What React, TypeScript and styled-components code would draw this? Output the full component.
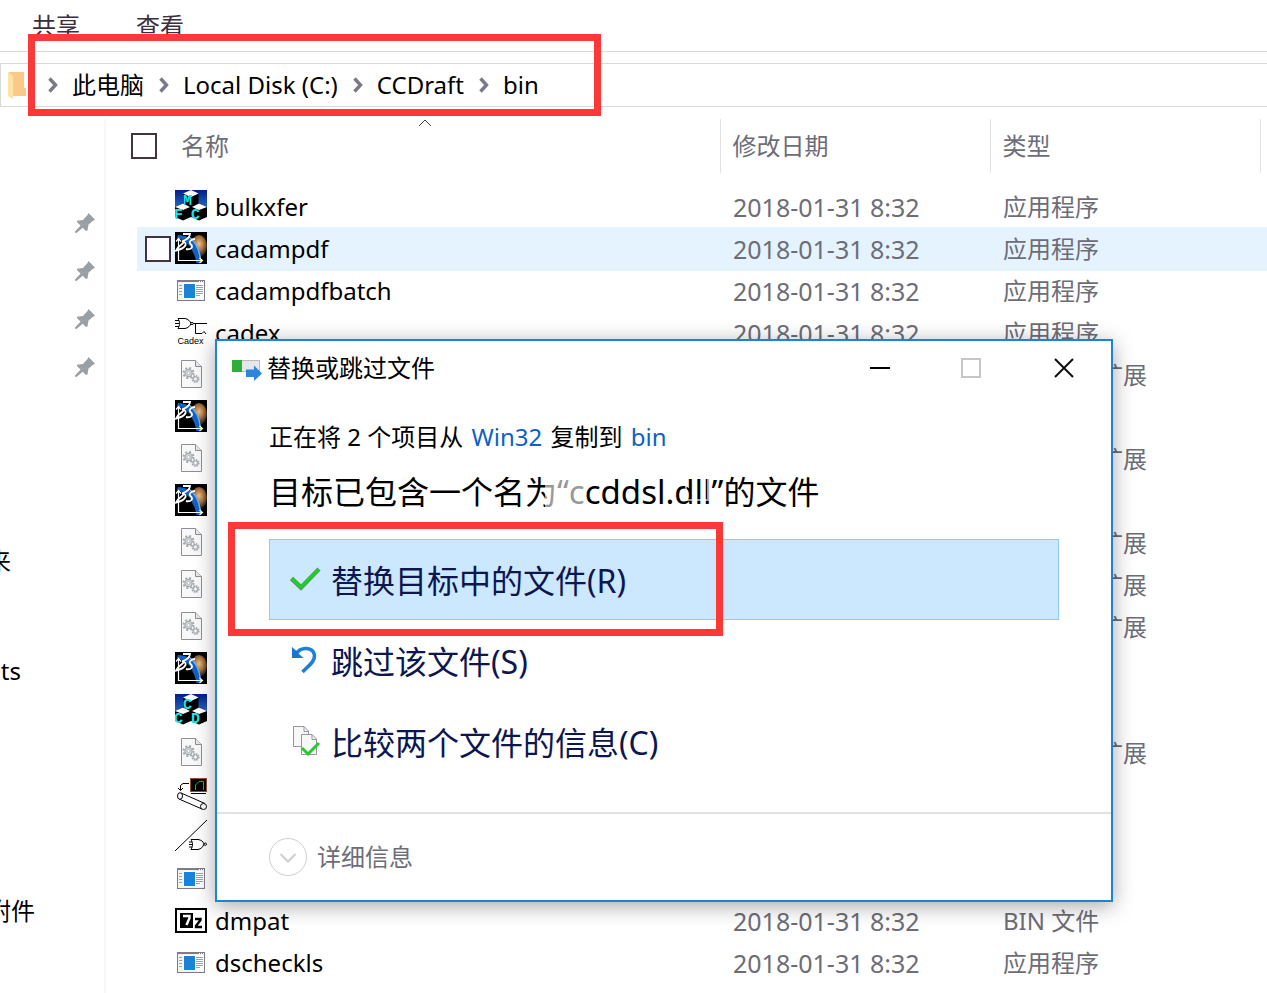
import React from 'react';
import styled, { createGlobalStyle, css } from 'styled-components';

const Global = createGlobalStyle`
  * { box-sizing: border-box; }
  html, body { margin: 0; background: #fff; overflow: hidden; }
  body {
    font-family: "Noto Sans", "Noto Sans CJK SC", sans-serif;
    font-size: 24px;
    line-height: 32px;
    color: #000;
  }
  button, input { font: inherit; color: inherit; }
`;

const RED = '#fc3838';
const BLUE = '#1c83d9';

const Explorer = styled.div`
  position: relative;
  display: flex;
  flex-direction: column;
  min-height: 100vh;
`;

const Ribbon = styled.nav`
  display: flex;
  gap: 56px;
  height: 52px;
  padding: 10px 32px 0;
  border-bottom: 1px solid #dadada;
`;

const RibbonTab = styled.button`
  border: 0;
  padding: 0;
  background: none;
  height: 32px;
  color: #3b2f3f;
`;

const AddressBar = styled.nav`
  display: flex;
  align-items: center;
  height: 44px;
  margin-top: 11px;
  padding-left: 6px;
  border: 1px solid #d9d9d9;
  border-right: 0;
`;

const Crumbs = styled.ol`
  display: flex;
  align-items: center;
  list-style: none;
  margin: 0 0 0 21px;
  padding: 0;
`;

const Crumb = styled.li`
  display: flex;
  align-items: center;
  margin-right: 15px;
`;

const CrumbLink = styled.a`
  margin-left: 14px;
  color: #000;
  text-decoration: none;
  white-space: nowrap;
`;

const Main = styled.div`
  display: flex;
  flex: 1;
  padding-top: 12px;
`;

const Sidebar = styled.aside`
  flex: 0 0 106px;
  overflow: hidden;
  border-right: 2px solid #f8f8f8;
`;

const PinList = styled.ul`
  display: flex;
  flex-direction: column;
  gap: 28px;
  align-items: flex-end;
  list-style: none;
  margin: 0;
  padding: 94px 9px 0 0;
`;

const Pin = styled.li`
  height: 20px;
  line-height: 0;
`;

const SideList = styled.ul`
  list-style: none;
  margin: 0;
  padding: 168px 0 0;
`;

const SideItem = styled.li<{ $space: number; $width: number }>`
  display: flex;
  justify-content: flex-end;
  width: ${p => p.$width}px;
  margin-bottom: ${p => p.$space}px;
  white-space: nowrap;
`;

const FileTable = styled.table`
  flex: 1;
  align-self: flex-start;
  table-layout: fixed;
  border-collapse: collapse;
  margin-left: 31px;
  width: 100%;
`;

const HeadCell = styled.th<{ $line?: boolean }>`
  height: 54px;
  padding: 0 0 0 12px;
  text-align: left;
  font-weight: 400;
  color: #6d6d78;
  ${p => p.$line && css`border-left: 1px solid #e3e3e3;`}
`;

const NameHead = styled.div`
  position: relative;
  display: flex;
  align-items: center;
  gap: 24px;
  margin-left: -18px;
`;

const SortMark = styled.span`
  position: absolute;
  left: 50%;
  top: -12px;
  margin-left: -7px;
  line-height: 0;
`;

const Check = styled.input`
  appearance: none;
  flex: none;
  width: 26px;
  height: 26px;
  margin: 0;
  border: 2px solid #43323f;
  background: #fff;
`;

const SpacerRow = styled.tr`
  height: 13px;
`;

const Row = styled.tr<{ $hot?: boolean }>`
  height: 42px;
  ${p => p.$hot && css`
    background: #e5f3ff;
    box-shadow: 0 1px #e5f3ff, 0 -1px #e5f3ff;
  `}
`;

const Cell = styled.td`
  padding: 0 0 0 13px;
  color: #6d6d78;
  white-space: nowrap;
`;

const DateCell = styled(Cell)`
  font-size: 25px;
`;

const NameCell = styled.td`
  padding: 0;
`;

const NameWrap = styled.label`
  display: flex;
  align-items: center;
  height: 42px;
  padding-left: 8px;
`;

const CheckSlot = styled.span`
  display: flex;
  width: 30px;
`;

const FileIcon = styled.span`
  display: flex;
  justify-content: center;
  align-items: center;
  width: 32px;
  height: 38px;
  padding-bottom: 2px;
  margin-right: 8px;
`;

const Dialog = styled.section`
  position: absolute;
  left: 215px;
  right: 154px;
  top: 339px;
  background: #fff;
  border: 2px solid ${BLUE};
  box-shadow: 0 4px 20px rgba(0, 0, 0, 0.35);
`;

const TitleBar = styled.header`
  display: flex;
  align-items: center;
  height: 54px;
  padding: 0 36px 0 15px;
`;

const Title = styled.h1`
  flex: 1;
  margin: 0 0 0 4px;
  font-size: 24px;
  font-weight: 400;
`;

const WindowButtons = styled.div`
  display: flex;
  gap: 70px;
`;

const WindowButton = styled.button`
  border: 0;
  padding: 0;
  background: none;
  width: 22px;
  height: 22px;
  line-height: 0;
`;

const Body = styled.div`
  padding: 26px 52px 30px;
`;

const Summary = styled.p`
  margin: 0;
`;

const PathLink = styled.a`
  margin: 0 2px;
  color: #0f5fc4;
  text-decoration: none;
`;

const Headline = styled.h2`
  margin: 16px 0 24px;
  font-size: 32px;
  line-height: 46px;
  font-weight: 400;
  white-space: nowrap;
`;

/* A faint white mark lies over parts of the file name. */
const MarkedName = styled.span`
  position: relative;
  font-size: 33px;
  &::before, &::after {
    content: "";
    position: absolute;
    opacity: 0.6;
  }
  &::before {
    left: -12px;
    top: 4px;
    width: 40px;
    height: 40px;
    background: #fff;
  }
  &::after {
    right: 14px;
    top: 8px;
    width: 20px;
    height: 20px;
    border: 2px solid #fff;
  }
`;

const Choice = styled.button<{ $active?: boolean }>`
  display: flex;
  align-items: center;
  gap: 10px;
  width: 100%;
  height: 81px;
  padding: 2px 0 0 20px;
  border: 1px solid ${p => (p.$active ? '#8dcbfb' : 'transparent')};
  background: ${p => (p.$active ? '#cce8ff' : 'none')};
  color: #0c1650;
  font-size: 32px;
  line-height: 46px;
  text-align: left;
`;

const ChoiceIcon = styled.span`
  width: 31px;
  padding-bottom: 4px;
  line-height: 0;
`;

const Footer = styled.footer`
  height: 88px;
  border-top: 2px solid #e1e1e1;
  padding: 0 52px;
  display: flex;
  align-items: center;
`;

const Details = styled.button`
  display: flex;
  align-items: center;
  gap: 10px;
  border: 0;
  padding: 0;
  background: none;
  color: #6d6d78;
`;

const AddressMark = styled.div`
  position: absolute;
  left: 28px;
  top: 34px;
  width: 573px;
  height: 82px;
  border: 7px solid ${RED};
  pointer-events: none;
`;

const ChoiceMark = styled(AddressMark)`
  left: 228px;
  top: 522px;
  width: 495px;
  height: 114px;
`;

const Chevron = () => (
  <svg width="10" height="16" viewBox="0 0 10 16">
    <path d="M1.5 1.5L7.5 8L1.5 14.5" fill="none" stroke="#7b7887" strokeWidth="3.4" />
  </svg>
);

const Folder = () => (
  <svg width="20" height="28" viewBox="0 0 20 28">
    <path d="M2 1H17V17H19V25H2Z" fill="#f8c987" />
    <path d="M1 1L6 5V28L1 25Z" fill="#fde3a5" />
  </svg>
);

const PinIcon = () => (
  <svg width="20" height="20" viewBox="0 0 20 20">
    <path d="M13.5 0L20 6.5L18.5 7.5L13.5 11.5L12.5 17.5L11 18L7.7 14.8L1.5 20L0 19.5V18.5L5.5 12.5L2 9V7.8L8 7L12.5 2Z" fill="#9aa0a4" />
  </svg>
);

const cubeText: React.CSSProperties = { fontFamily: '"Liberation Mono", monospace', fontWeight: 700 };

const Cubes = ({ letters }: { letters: string }) => (
  <svg width="32" height="32" viewBox="0 0 32 32">
    <defs>
      <linearGradient id="sky" x1="0" y1="0" x2="0" y2="1">
        <stop offset="0" stopColor="#001f86" />
        <stop offset="1" stopColor="#2f6fd0" />
      </linearGradient>
    </defs>
    <rect width="32" height="20" fill="url(#sky)" />
    <path d="M0 17L8 13L16 17L24 13L32 17V27L24 30.500L16 27L8 30.500L0 27Z" fill="#000" />
    <path d="M8 3.500L16 7L23.500 3.500V14L16 18L8 14.500Z" fill="#000" />
    <path d="M8 3.500L16 0L23.500 3.500L16 7Z" fill="#fff" />
    <path d="M0 17L8 13.500L15 17L8 20ZM17 17L24 13.500L32 17L24 20Z" fill="#fff" />
    <g fill="#19e6ee" fontSize="15" style={cubeText}>
      <text x="8" y="15">{letters[0]}</text>
      <text x="-1" y="28.500">{letters[1]}</text>
      <text x="16" y="28.500">{letters[2]}</text>
    </g>
  </svg>
);

const Dassault = () => (
  <svg width="32" height="32" viewBox="0 0 32 32">
    <defs>
      <radialGradient id="globe" cx="0.5" cy="0.4" r="0.6">
        <stop offset="0" stopColor="#f0c083" />
        <stop offset="0.5" stopColor="#a8733f" />
        <stop offset="1" stopColor="#1d1a22" />
      </radialGradient>
    </defs>
    <rect width="32" height="32" fill="#000" />
    <ellipse cx="24" cy="14" rx="8" ry="11" fill="url(#globe)" />
    <path d="M3 3C17 3 25 15 26.500 31H21.500C19 18 14 9 2 6Z" fill="#1560c4" />
    <path d="M14 5C21 10 24.500 18 25.500 28" fill="none" stroke="#69b2ee" strokeWidth="1.500" />
    <path d="M8 2H15C15 5 11 8 7 9.500C13 10 12 16 1 18.500C3 14 7 13 9 10M20 7C16 7 13.500 10 15.500 12C19 15 16 18 11 17" fill="none" stroke="#fff" strokeWidth="1.800" />
    <path d="M3.500 7V28.500H27M1 9.500L3.500 6.500L6 9.500M24.500 26L27.500 28.500L24.500 31" fill="none" stroke="#fff" strokeWidth="1.200" />
  </svg>
);

const AppWindow = () => (
  <svg width="28" height="21" viewBox="0 0 28 21" shapeRendering="crispEdges">
    <rect x=".5" y=".5" width="27" height="20" fill="#f2f3f3" stroke="#7f7c8a" />
    <path d="M0 1H28" stroke="#7f7c8a" strokeWidth="2" />
    <path d="M22 1H23M24 1H25M26 1H27" stroke="#fff" />
    <rect x="6" y="3" width="21" height="16" fill="#fff" />
    <rect x="7" y="4" width="11" height="14" fill="#1b82da" />
    <path d="M2 5.500H5M2 8.500H5M2 11.500H5M2 14.500H5M19 5.500H26M19 7.500H26M19 9.500H26M19 11.500H26M19 13.500H26M19 15.500H23" stroke="#9aa3a8" />
  </svg>
);

const Cadex = () => (
  <svg width="32" height="28" viewBox="0 0 32 28">
    <path d="M3 .5H10C13 1 15 3 16 5.500C15 8 13 10 10 10.500H3C5 7 5 4 3 .5M0 2.500H4M0 5.500H4.500M0 8.500H4M18 5.500H32M20.500 5.500V15.500H27L29 13.500L31 16" fill="none" stroke="#000" />
    <circle cx="17" cy="5.500" r="1.200" fill="#fff" stroke="#000" />
    <text x="2.500" y="26" fontSize="9" fontFamily="Liberation Sans, sans-serif">Cadex</text>
  </svg>
);

const Library = () => (
  <svg width="22" height="28" viewBox="0 0 22 28">
    <path d="M1.500.5H15.500L21.500 6.500V27.500H1.500Z" fill="#f8f8f9" stroke="#8f8d99" />
    <path d="M15.500.5V6.500H21.500" fill="#e9e9eb" stroke="#8f8d99" />
    <circle cx="8.500" cy="13" r="5" fill="none" stroke="#a3a9ac" strokeWidth="2" strokeDasharray="2 1.930" />
    <circle cx="8.500" cy="13" r="3.600" fill="#d9dcdd" stroke="#a3a9ac" strokeWidth="1.200" />
    <circle cx="8.500" cy="13" r="1.600" fill="#fff" stroke="#a3a9ac" strokeWidth=".8" />
    <circle cx="15.500" cy="19" r="3.200" fill="none" stroke="#a3a9ac" strokeWidth="1.600" strokeDasharray="1.500 1" />
    <circle cx="15.500" cy="19" r="2.400" fill="#d9dcdd" stroke="#a3a9ac" />
    <circle cx="15.500" cy="19" r="1" fill="#fff" />
  </svg>
);

const Plotter = () => (
  <svg width="32" height="32" viewBox="0 0 32 32">
    <rect x="15.500" y=".5" width="16" height="13" fill="#000" stroke="#91502b" />
    <path d="M20.500 12V7L24 3.500H28.500V12" fill="none" stroke="#20b63a" />
    <path d="M16 15.500H31" stroke="#000" />
    <path d="M14 5.500H8L5.500 7.500V12M3 10L5.500 12.500L8 10" fill="none" stroke="#000" />
    <path d="M6 15L30 25.500M4 21L27 31" stroke="#000" fill="none" />
    <ellipse cx="5" cy="18" rx="2.500" ry="3.300" fill="#fff" stroke="#000" />
    <circle cx="28.500" cy="28.500" r="3" fill="#fff" stroke="#000" />
  </svg>
);

const Gate = () => (
  <svg width="32" height="32" viewBox="0 0 32 32">
    <path d="M0 31L32 0" stroke="#000" />
    <path d="M16 19.500H23C26 20 28 21 29 24C28 27 26 29 23 29.500H16C18 26 18 23 16 19.500M14 22H17M14 24.500H18M14 27H17" fill="#fff" stroke="#000" />
    <circle cx="30.300" cy="24.200" r="1.200" fill="#fff" stroke="#000" />
  </svg>
);

const SevenZip = () => (
  <svg width="32" height="25" viewBox="0 0 32 25">
    <rect x="1" y="1" width="30" height="23" fill="#fff" stroke="#000" strokeWidth="2" />
    <rect x="5" y="5" width="13" height="15" fill="#000" />
    <path d="M8 8H14.500V10L11.500 17" fill="none" stroke="#fff" strokeWidth="2.400" />
    <path d="M20 11H25.500V12L21 18V19H27" fill="none" stroke="#000" strokeWidth="2.400" />
  </svg>
);

const CopyIcon = () => (
  <svg width="31" height="28" viewBox="0 -6 31 28">
    <rect x=".5" y=".5" width="27" height="11" fill="#e6e7e8" stroke="#b9bbbd" />
    <rect x="0" y="0" width="10" height="12" fill="#2fac3c" />
    <path d="M14 9.500H22V5.500L30 13.500L22 21V17H14Z" fill="#2a87dc" />
  </svg>
);

const Tick = () => (
  <svg width="31" height="24" viewBox="0 0 31 24">
    <path d="M1.500 11.500L11 20.500L29 2" fill="none" stroke="#5a9668" strokeWidth="4.500" />
    <path d="M2 11.500L11 20L28.500 2.500" fill="none" stroke="#22cc28" strokeWidth="3.200" />
  </svg>
);

const Undo = () => (
  <svg width="28" height="28" viewBox="0 0 28 28">
    <path d="M6 8C11 0 23 1 24.500 9C25 16 18 20 12.500 26" fill="none" stroke="#1d80d8" strokeWidth="3.600" />
    <path d="M2 1V12H13.500L9 8L7.500 6Z" fill="#1c74cf" />
  </svg>
);

const Compare = () => (
  <svg width="31" height="32" viewBox="0 0 31 32">
    <path d="M3.500 1.500H14L18.500 6V21.500H3.500Z" fill="#f7f7f8" stroke="#96959e" />
    <path d="M14 1.500V6.500H18.500" fill="none" stroke="#96959e" />
    <path d="M11.500 9.500H22L26.500 14V29.500H11.500Z" fill="#f7f7f8" stroke="#96959e" />
    <path d="M22 9.500V14.500H26.500" fill="none" stroke="#96959e" />
    <path d="M12 23L18 29L29 18" fill="none" stroke="#22cc28" strokeWidth="3" />
  </svg>
);

const APP = '应用程序';
const DLL = '应用程序扩展';
const DATE = '2018-01-31 8:32';

type FileRow = { icon: React.ReactNode; name?: string; date?: string; type?: string; hot?: boolean };

const files: FileRow[] = [
  { icon: <Cubes letters="MFC" />, name: 'bulkxfer', date: DATE, type: APP },
  { icon: <Dassault />, name: 'cadampdf', date: DATE, type: APP, hot: true },
  { icon: <AppWindow />, name: 'cadampdfbatch', date: DATE, type: APP },
  { icon: <Cadex />, name: 'cadex', date: DATE, type: APP },
  { icon: <Library />, type: DLL },
  { icon: <Dassault /> },
  { icon: <Library />, type: DLL },
  { icon: <Dassault /> },
  { icon: <Library />, type: DLL },
  { icon: <Library />, type: DLL },
  { icon: <Library />, type: DLL },
  { icon: <Dassault /> },
  { icon: <Cubes letters="CCD" /> },
  { icon: <Library />, type: DLL },
  { icon: <Plotter /> },
  { icon: <Gate /> },
  { icon: <AppWindow /> },
  { icon: <SevenZip />, name: 'dmpat', date: DATE, type: 'BIN 文件' },
  { icon: <AppWindow />, name: 'dscheckls', date: DATE, type: APP },
];

export default function App() {
  return (
    <Explorer>
      <Global />
      <Ribbon>
        <RibbonTab>共享</RibbonTab>
        <RibbonTab>查看</RibbonTab>
      </Ribbon>
      <AddressBar>
        <Folder />
        <Crumbs>
          {['此电脑', 'Local Disk (C:)', 'CCDraft', 'bin'].map(c => (
            <Crumb key={c}>
              <Chevron />
              <CrumbLink href="#">{c}</CrumbLink>
            </Crumb>
          ))}
        </Crumbs>
      </AddressBar>
      <Main>
        <Sidebar>
          <PinList>
            {[0, 1, 2, 3].map(i => <Pin key={i}><PinIcon /></Pin>)}
          </PinList>
          <SideList>
            <SideItem $width={11} $space={78}>来</SideItem>
            <SideItem $width={21} $space={208}>ts</SideItem>
            <SideItem $width={35} $space={0}>附件</SideItem>
          </SideList>
        </Sidebar>
        <FileTable>
          <colgroup>
            <col />
            <col width="270" />
            <col width="270" />
            <col width="7" />
          </colgroup>
          <thead>
            <tr>
              <HeadCell>
                <NameHead>
                  <Check type="checkbox" aria-label="全选" />
                  名称
                  <SortMark>
                    <svg width="14" height="8" viewBox="0 0 14 8">
                      <path d="M1 7L7 1L13 7" fill="none" stroke="#4a3d4a" />
                    </svg>
                  </SortMark>
                </NameHead>
              </HeadCell>
              <HeadCell $line>修改日期</HeadCell>
              <HeadCell $line>类型</HeadCell>
              <HeadCell $line />
            </tr>
          </thead>
          <tbody>
            <SpacerRow />
            {files.map((f, i) => (
              <Row key={i} $hot={f.hot}>
                <NameCell>
                  <NameWrap>
                    <CheckSlot>{f.hot && <Check type="checkbox" />}</CheckSlot>
                    <FileIcon>{f.icon}</FileIcon>
                    {f.name}
                  </NameWrap>
                </NameCell>
                <DateCell>{f.date}</DateCell>
                <Cell>{f.type}</Cell>
                <Cell />
              </Row>
            ))}
          </tbody>
        </FileTable>
      </Main>

      <Dialog role="dialog" aria-labelledby="dialog-title">
        <TitleBar>
          <CopyIcon />
          <Title id="dialog-title">替换或跳过文件</Title>
          <WindowButtons>
            <WindowButton aria-label="最小化">
              <svg width="22" height="22"><path d="M1 11H21" stroke="#000" strokeWidth="2" /></svg>
            </WindowButton>
            <WindowButton aria-label="最大化" disabled>
              <svg width="22" height="22"><rect x="1" y="2" width="18" height="18" fill="none" stroke="#c6c6c6" strokeWidth="2" /></svg>
            </WindowButton>
            <WindowButton aria-label="关闭">
              <svg width="22" height="22"><path d="M2 2L20 20M20 2L2 20" stroke="#111" strokeWidth="2" /></svg>
            </WindowButton>
          </WindowButtons>
        </TitleBar>
        <Body>
          <Summary>
            正在将 2 个项目从 <PathLink href="#">Win32</PathLink> 复制到 <PathLink href="#">bin</PathLink>
          </Summary>
          <Headline>目标已包含一个名为<MarkedName>“ccddsl.dll”</MarkedName>的文件</Headline>
          <Choice $active><ChoiceIcon><Tick /></ChoiceIcon>替换目标中的文件(R)</Choice>
          <Choice><ChoiceIcon><Undo /></ChoiceIcon>跳过该文件(S)</Choice>
          <Choice><ChoiceIcon><Compare /></ChoiceIcon>比较两个文件的信息(C)</Choice>
        </Body>
        <Footer>
          <Details>
            <svg width="38" height="38">
              <circle cx="19" cy="19" r="18.500" fill="none" stroke="#cfcfcf" />
              <path d="M11.500 16L19 23.500L26.500 16" fill="none" stroke="#cfcfcf" strokeWidth="2" />
            </svg>
            详细信息
          </Details>
        </Footer>
      </Dialog>
      <AddressMark />
      <ChoiceMark />
    </Explorer>
  );
}
